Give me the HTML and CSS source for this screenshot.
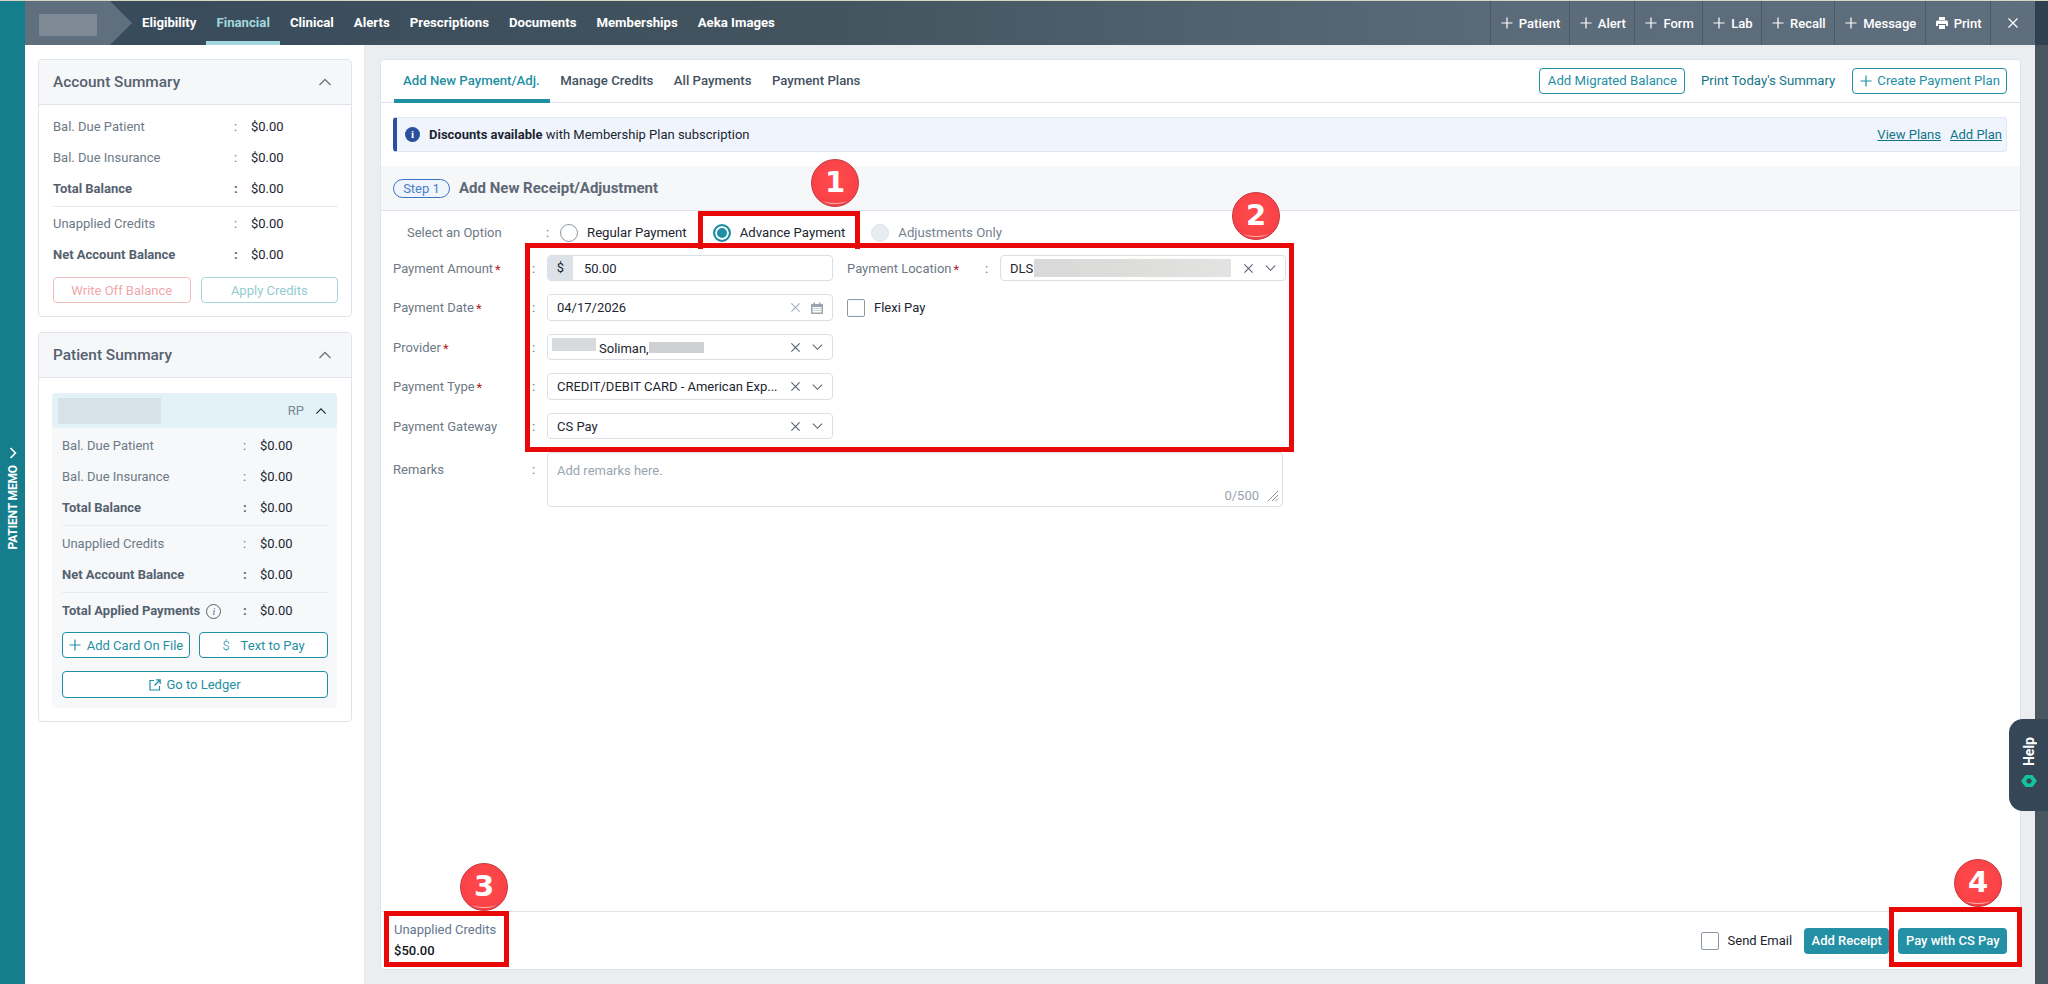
FILE: index.html
```html
<!DOCTYPE html>
<html lang="en">
<head>
    <meta charset="UTF-8">
    <meta name="viewport" content="width=device-width, initial-scale=1.0">
    <title>Add New Payment</title>
    <link rel="stylesheet" href="styles.css">
</head>
<body>
    <svg class="icon-defs" aria-hidden="true">
        <symbol id="i-plus" viewBox="0 0 12 12"><path d="M6 .5v11M.5 6h11" fill="none" stroke="currentColor" stroke-width="1.2"/></symbol>
        <symbol id="i-x" viewBox="0 0 12 12"><path d="M1.5 1.5l9 9M10.5 1.5l-9 9" fill="none" stroke="currentColor" stroke-width="1.2"/></symbol>
        <symbol id="i-down" viewBox="0 0 12 8"><path d="M1 1.5l5 5 5-5" fill="none" stroke="currentColor" stroke-width="1.2"/></symbol>
        <symbol id="i-up" viewBox="0 0 14 8"><path d="M1.5 7L7 1.5 12.5 7" fill="none" stroke="currentColor" stroke-width="1.3"/></symbol>
        <symbol id="i-print" viewBox="0 0 12 12"><path d="M3 0h6v3H3zM1.5 3.6h9c.8 0 1.5.7 1.5 1.5V9h-2V7H2v2H0V5.1c0-.8.7-1.5 1.5-1.5zM3 8h6v4H3z" fill="currentColor"/></symbol>
        <symbol id="i-cal" viewBox="0 0 12 12"><path d="M1 2h10c.5 0 1 .4 1 1v8c0 .6-.5 1-1 1H1c-.5 0-1-.4-1-1V3c0-.6.5-1 1-1zM2.500 .5h1.500V2H2.500zM8 .5h1.500V2H8z" fill="currentColor"/><path d="M1.500 5h9v5.500h-9z" fill="#fff"/><path d="M2.500 6h1v1h-1zM4.500 6h1v1h-1zM6.500 6h1v1h-1zM8.500 6h1v1h-1zM2.500 8h1v1h-1zM4.500 8h1v1h-1zM6.500 8h1v1h-1zM8.500 8h1v1h-1z" fill="currentColor"/></symbol>
        <symbol id="i-open" viewBox="0 0 12 12"><path d="M5 1.500H1v9.500h9.500V7M7 .8h4.200V5M11 1L5.500 6.500" fill="none" stroke="currentColor" stroke-width="1.200"/></symbol>
        <symbol id="i-resize" viewBox="0 0 12 12"><path d="M11 1L1 11M11 5l-6 6M11 8.500L8.500 11" fill="none" stroke="currentColor" stroke-width="1"/></symbol>
    </svg>

    <div class="topline"></div>
    <div class="app">
        <aside class="memo-strip">
            <svg class="memo-chevron" viewBox="0 0 8 12"><path d="M1.500 1l5 5-5 5" fill="none" stroke="currentColor" stroke-width="1.600"/></svg>
            <span class="memo-text">PATIENT MEMO</span>
        </aside>

        <div class="workspace">
            <header class="topbar">
                <div class="logo"><span class="logo-blur"></span></div>
                <nav class="nav">
                    <a class="nav-item">Eligibility</a>
                    <a class="nav-item active">Financial</a>
                    <a class="nav-item">Clinical</a>
                    <a class="nav-item">Alerts</a>
                    <a class="nav-item">Prescriptions</a>
                    <a class="nav-item">Documents</a>
                    <a class="nav-item">Memberships</a>
                    <a class="nav-item">Aeka Images</a>
                </nav>
                <div class="actions">
                    <a class="action"><svg class="ico-12"><use href="#i-plus"/></svg>Patient</a>
                    <a class="action"><svg class="ico-12"><use href="#i-plus"/></svg>Alert</a>
                    <a class="action"><svg class="ico-12"><use href="#i-plus"/></svg>Form</a>
                    <a class="action"><svg class="ico-12"><use href="#i-plus"/></svg>Lab</a>
                    <a class="action"><svg class="ico-12"><use href="#i-plus"/></svg>Recall</a>
                    <a class="action"><svg class="ico-12"><use href="#i-plus"/></svg>Message</a>
                    <a class="action"><svg class="ico-12"><use href="#i-print"/></svg>Print</a>
                    <a class="action action-close"><svg class="ico-12"><use href="#i-x"/></svg></a>
                </div>
            </header>

            <div class="columns">
                <div class="sidebar">
                    <section class="panel">
                        <div class="panel-head">
                            <h2>Account Summary</h2>
                            <svg class="panel-chevron"><use href="#i-up"/></svg>
                        </div>
                        <div class="panel-body">
                            <div class="sum-row"><span>Bal. Due Patient</span><i>:</i><b>$0.00</b></div>
                            <div class="sum-row"><span>Bal. Due Insurance</span><i>:</i><b>$0.00</b></div>
                            <div class="sum-row strong"><span>Total Balance</span><i>:</i><b>$0.00</b></div>
                            <div class="sum-line"></div>
                            <div class="sum-row"><span>Unapplied Credits</span><i>:</i><b>$0.00</b></div>
                            <div class="sum-row strong"><span>Net Account Balance</span><i>:</i><b>$0.00</b></div>
                            <div class="panel-buttons">
                                <button class="btn-faded red">Write Off Balance</button>
                                <button class="btn-faded teal">Apply Credits</button>
                            </div>
                        </div>
                    </section>

                    <section class="panel patient-panel">
                        <div class="panel-head">
                            <h2>Patient Summary</h2>
                            <svg class="panel-chevron"><use href="#i-up"/></svg>
                        </div>
                        <div class="patient-body">
                            <div class="patient-box">
                                <div class="patient-head">
                                    <span class="patient-blur"></span>
                                    <span class="patient-tag">RP</span>
                                    <svg class="patient-chevron"><use href="#i-up"/></svg>
                                </div>
                                <div class="patient-rows">
                                    <div class="sum-row"><span>Bal. Due Patient</span><i>:</i><b>$0.00</b></div>
                                    <div class="sum-row"><span>Bal. Due Insurance</span><i>:</i><b>$0.00</b></div>
                                    <div class="sum-row strong"><span>Total Balance</span><i>:</i><b>$0.00</b></div>
                                    <div class="sum-line"></div>
                                    <div class="sum-row"><span>Unapplied Credits</span><i>:</i><b>$0.00</b></div>
                                    <div class="sum-row strong"><span>Net Account Balance</span><i>:</i><b>$0.00</b></div>
                                    <div class="sum-line"></div>
                                    <div class="sum-row strong"><span>Total Applied Payments<em class="info-ring">i</em></span><i>:</i><b>$0.00</b></div>
                                    <div class="patient-buttons">
                                        <button class="btn-outline"><svg class="ico-12"><use href="#i-plus"/></svg>Add Card On File</button>
                                        <button class="btn-outline"><span class="thin-dollar">$</span>Text to Pay</button>
                                        <button class="btn-outline wide"><svg class="ico-12"><use href="#i-open"/></svg>Go to Ledger</button>
                                    </div>
                                </div>
                            </div>
                        </div>
                    </section>
                </div>

                <main class="main">
                    <div class="card">
                        <div class="tabs-bar">
                            <div class="tabs">
                                <a class="tab active">Add New Payment/Adj.</a>
                                <a class="tab">Manage Credits</a>
                                <a class="tab">All Payments</a>
                                <a class="tab">Payment Plans</a>
                            </div>
                            <div class="tab-tools">
                                <button class="btn-outline">Add Migrated Balance</button>
                                <a class="tool-link">Print Today's Summary</a>
                                <button class="btn-outline btn-create"><svg class="ico-12"><use href="#i-plus"/></svg>Create Payment Plan</button>
                            </div>
                        </div>

                        <div class="banner">
                            <span class="banner-info">i</span>
                            <span class="banner-text"><strong>Discounts available</strong> with Membership Plan subscription</span>
                            <a class="banner-link">View Plans</a>
                            <a class="banner-link">Add Plan</a>
                        </div>

                        <div class="step-head">
                            <span class="step-pill">Step 1</span>
                            <h3>Add New Receipt/Adjustment</h3>
                        </div>

                        <div class="options">
                            <span class="options-label">Select an Option</span>
                            <span class="options-colon">:</span>
                            <label class="radio"><span class="radio-dot"></span>Regular Payment</label>
                            <label class="radio checked"><span class="radio-dot"></span>Advance Payment</label>
                            <label class="radio disabled"><span class="radio-dot"></span>Adjustments Only</label>
                        </div>

                        <div class="form">
                            <label class="form-label">Payment Amount<sup>*</sup></label>
                            <span class="form-colon">:</span>
                            <div class="field field-money"><span class="addon">$</span><span class="field-value">50.00</span></div>
                            <label class="form-label">Payment Location<sup>*</sup></label>
                            <span class="form-colon side">:</span>
                            <div class="field">
                                <span class="field-value">DLS<span class="blur blur-location"></span></span>
                                <svg class="ico-x"><use href="#i-x"/></svg>
                                <svg class="ico-down"><use href="#i-down"/></svg>
                            </div>

                            <label class="form-label">Payment Date<sup>*</sup></label>
                            <span class="form-colon">:</span>
                            <div class="field">
                                <span class="field-value">04/17/2026</span>
                                <svg class="ico-x pale"><use href="#i-x"/></svg>
                                <svg class="ico-cal"><use href="#i-cal"/></svg>
                            </div>
                            <label class="check flexi"><span class="check-box"></span>Flexi Pay</label>

                            <label class="form-label">Provider<sup>*</sup></label>
                            <span class="form-colon">:</span>
                            <div class="field field-provider">
                                <span class="field-value"><span class="blur blur-first"></span>Soliman,<span class="blur blur-last"></span></span>
                                <svg class="ico-x"><use href="#i-x"/></svg>
                                <svg class="ico-down"><use href="#i-down"/></svg>
                            </div>
                            <span class="form-skip"></span>

                            <label class="form-label">Payment Type<sup>*</sup></label>
                            <span class="form-colon">:</span>
                            <div class="field">
                                <span class="field-value">CREDIT/DEBIT CARD - American Exp...</span>
                                <svg class="ico-x"><use href="#i-x"/></svg>
                                <svg class="ico-down"><use href="#i-down"/></svg>
                            </div>
                            <span class="form-skip"></span>

                            <label class="form-label">Payment Gateway</label>
                            <span class="form-colon">:</span>
                            <div class="field">
                                <span class="field-value">CS Pay</span>
                                <svg class="ico-x"><use href="#i-x"/></svg>
                                <svg class="ico-down"><use href="#i-down"/></svg>
                            </div>
                            <span class="form-skip"></span>

                            <label class="form-label top">Remarks</label>
                            <span class="form-colon top">:</span>
                            <div class="remarks">
                                <span class="remarks-hint">Add remarks here.</span>
                                <div class="remarks-foot">0/500<svg class="ico-resize"><use href="#i-resize"/></svg></div>
                            </div>
                        </div>

                        <footer class="card-foot">
                            <div class="credits">
                                <span>Unapplied Credits</span>
                                <strong>$50.00</strong>
                            </div>
                            <div class="foot-actions">
                                <label class="check"><span class="check-box"></span>Send Email</label>
                                <button class="btn-solid add-receipt">Add Receipt</button>
                                <button class="btn-solid">Pay with CS Pay</button>
                            </div>
                        </footer>
                    </div>
                </main>
            </div>
        </div>

        <div class="edge-strip"></div>
    </div>

    <!-- annotations drawn over the screenshot -->
    <div class="mark mark-1"></div>
    <div class="mark mark-2"></div>
    <div class="mark mark-3"></div>
    <div class="mark mark-4"></div>
    <div class="badge badge-1">1</div>
    <div class="badge badge-2">2</div>
    <div class="badge badge-3">3</div>
    <div class="badge badge-4">4</div>

    <div class="help-tab">
        <span class="help-text">Help</span>
        <svg class="help-logo" viewBox="0 0 16 12"><path d="M4.500 0h7L16 6l-4.500 6h-7L0 6z" fill="#15c39a"/><path d="M6.500 3.500h3L11 6 9.500 8.500h-3L5 6z" fill="#354657"/></svg>
    </div>
</body>
</html>
```

FILE: styles.css
```css
* {
    box-sizing: border-box;
}
html, body {
    margin: 0;
    height: 984px;
    overflow: hidden;
}
body {
    position: relative;
    font-family: Roboto, 'Noto Sans', sans-serif;
    font-size: 13px;
    color: #1c2530;
    background: #ebeef1;
}
button {
    font-family: inherit;
    font-size: 13px;
    cursor: pointer;
}
.icon-defs {
    position: absolute;
    width: 0;
    height: 0;
}
.ico-12 {
    width: 12px;
    height: 12px;
    flex: none;
}
.topline {
    height: 1px;
    background: #d8d5c3;
}
.app {
    display: flex;
    height: 983px;
}

/* left memo strip */
.memo-strip {
    width: 25px;
    flex: none;
    background: #157d8c;
    color: #fff;
    display: flex;
    flex-direction: column;
    align-items: center;
    justify-content: center;
    gap: 6px;
    padding-top: 12px;
}
.memo-chevron {
    width: 8px;
    height: 12px;
}
.memo-text {
    writing-mode: vertical-rl;
    transform: rotate(180deg);
    font-size: 12px;
    font-weight: 700;
    letter-spacing: -0.15px;
}

.workspace {
    width: 2010px;
    flex: none;
    display: flex;
    flex-direction: column;
}
.edge-strip {
    flex: 1;
    background: linear-gradient(#2f4151 0, #2f4151 44px, #48565f 44px);
}

/* top bar */
.topbar {
    height: 44px;
    display: flex;
    color: #fff;
    background: linear-gradient(90deg, #374a5b 0%, #43545f 40%, #5c6b7a 75%, #5f6e7d 100%);
}
.logo {
    width: 107px;
    flex: none;
    background: #5f6f7e;
    clip-path: polygon(0 0, 85px 0, 100% 50%, 85px 100%, 0 100%);
    padding: 13px 0 0 14px;
}
.logo-blur {
    display: block;
    width: 58px;
    height: 22px;
    background: #7d8a96;
}
.nav {
    display: flex;
}
.nav-item {
    padding: 0 10px;
    line-height: 44px;
    font-weight: 700;
    font-size: 13.2px;
}
.nav-item.active {
    color: #a3d8de;
    box-shadow: inset 0 -4px 0 #a3d8de;
}
.actions {
    margin-left: auto;
    display: flex;
}
.action {
    display: flex;
    align-items: center;
    gap: 6px;
    padding: 0 8.5px 0 10px;
    font-weight: 500;
    border-left: 1px solid #4a5967;
}
.action-close {
    width: 45px;
    justify-content: center;
    padding: 0;
}

.columns {
    flex: 1;
    display: flex;
    min-height: 0;
}

/* sidebar */
.sidebar {
    width: 340px;
    flex: none;
    background: #fff;
    padding: 14px 13px;
    border-right: 1px solid #e3e7eb;
}
.panel {
    width: 314px;
    border: 1px solid #dfe4ec;
    border-radius: 4px;
    background: #fff;
}
.patient-panel {
    margin-top: 15px;
}
.panel-head {
    height: 45px;
    background: #f6f7f9;
    border-bottom: 1px solid #dfe4ec;
    border-radius: 4px 4px 0 0;
    display: flex;
    align-items: center;
    justify-content: space-between;
    padding: 0 14px;
}
.panel-head h2 {
    margin: 0;
    font-size: 15.4px;
    font-weight: 500;
    color: #55616f;
}
.panel-chevron {
    width: 14px;
    height: 8px;
    color: #6a7683;
    margin-right: 5px;
}
.panel-body {
    padding: 6px 13px 13px 14px;
}
.sum-row {
    display: grid;
    grid-template-columns: 181px 17px 1fr;
    height: 31px;
    align-items: center;
    color: #6d7986;
}
.sum-row i {
    font-style: normal;
}
.sum-row b {
    font-weight: 400;
    color: #1c2530;
}
.sum-row.strong span,
.sum-row.strong i {
    font-weight: 700;
    color: #55616f;
}
.sum-line {
    height: 1px;
    background: #e7eaee;
    margin: 2px 0 1px;
}
.panel-buttons {
    display: flex;
    gap: 10px;
    margin-top: 7px;
}
.btn-faded {
    flex: 1;
    height: 26px;
    border-radius: 4px;
    background: #fff;
    padding: 0;
}
.btn-faded.red {
    border: 1px solid #f3bcbf;
    color: #f0a7ab;
}
.btn-faded.teal {
    border: 1px solid #a5d6dc;
    color: #94cbd3;
}

/* patient box */
.patient-body {
    padding: 15px 14px 13px 13px;
}
.patient-box {
    background: #f6f8fa;
    border-radius: 4px;
    height: 315px;
}
.patient-head {
    height: 35px;
    background: #e3f2f7;
    border-radius: 4px;
    display: flex;
    align-items: center;
    padding: 0 10px 0 6px;
}
.patient-blur {
    width: 103px;
    height: 26px;
    background: #d6e4e9;
}
.patient-tag {
    margin-left: auto;
    color: #7b8793;
}
.patient-chevron {
    width: 12px;
    height: 8px;
    margin-left: 11px;
    color: #1c2530;
}
.patient-rows {
    padding: 2px 9px 0 10px;
}
.patient-rows .sum-line {
    margin: 2px 0;
}
.info-ring {
    display: inline-block;
    width: 15px;
    height: 15px;
    line-height: 13px;
    margin-left: 6px;
    border: 1px solid #55616f;
    border-radius: 50%;
    text-align: center;
    font-size: 10px;
    font-weight: 500;
    font-family: 'Liberation Serif', serif;
    vertical-align: 0;
}
.patient-buttons {
    display: grid;
    grid-template-columns: 128px 129px;
    gap: 13px 9px;
    margin-top: 6px;
}
.patient-buttons .btn-outline {
    height: 26px;
    padding: 0;
    justify-content: center;
}
.patient-buttons .wide {
    grid-column: 1 / -1;
    height: 27px;
    gap: 5px;
}
.thin-dollar {
    font-weight: 300;
    margin-right: 5px;
}
.btn-outline {
    display: inline-flex;
    align-items: center;
    gap: 6px;
    height: 26px;
    background: #fff;
    border: 1px solid #1f8fa3;
    border-radius: 4px;
    color: #1f8fa3;
    padding: 0 6px;
}

/* main card */
.main {
    flex: 1;
    padding: 14px 14px 13px 15px;
}
.card {
    height: 911px;
    background: #fff;
    border: 1px solid #dfe4ec;
    border-radius: 4px;
    display: flex;
    flex-direction: column;
}
.tabs-bar {
    height: 43px;
    flex: none;
    display: flex;
    justify-content: space-between;
    border-bottom: 1px solid #dfe2e8;
    padding: 0 13px;
}
.tabs {
    display: flex;
}
.tab {
    height: 43px;
    line-height: 41px;
    padding: 0 10px 0 9px;
    font-weight: 500;
    font-size: 13.2px;
    color: #445160;
}
.tab + .tab {
    margin-left: 1.5px;
}
.tab.active {
    color: #1f8fa3;
    box-shadow: inset 0 -4px 0 #1f8fa3;
}
.tab-tools {
    display: flex;
    align-items: center;
    padding-bottom: 9px;
    padding-top: 8px;
}
.tab-tools .btn-outline {
    font-size: 13.2px;
    padding: 0 7px 0 8px;
    gap: 5px;
}
.tab-tools .btn-create {
    padding: 0 6px 0 7px;
}
.tool-link {
    color: #137489;
    font-size: 13.2px;
    margin: 0 17px 0 16px;
}
.banner {
    height: 35px;
    flex: none;
    margin: 14px 13px 0 12px;
    display: flex;
    align-items: center;
    gap: 9px;
    background: #f0f5fd;
    border: 1px solid #dde7f5;
    border-left: 4px solid #2a4f9d;
    border-radius: 4px;
    padding: 0 4px 0 8px;
}
.banner-info {
    width: 15px;
    height: 15px;
    line-height: 15px;
    border-radius: 50%;
    background: #2a4f9d;
    color: #fff;
    text-align: center;
    font-size: 11px;
    font-weight: 700;
    font-family: 'Liberation Serif', serif;
}
.banner-text {
    flex: 1;
}
.banner-text strong {
    font-weight: 700;
}
.banner-link {
    color: #137489;
    text-decoration: underline;
}
.step-head {
    height: 45px;
    flex: none;
    margin-top: 14px;
    background: #f6f7f9;
    border-bottom: 1px solid #dfe4ec;
    display: flex;
    align-items: center;
    gap: 9px;
    padding: 0 12px;
}
.step-pill {
    width: 57px;
    height: 19px;
    line-height: 17px;
    text-align: center;
    border: 1px solid #3b74c4;
    border-radius: 10px;
    background: #f0f5fd;
    color: #4a80c8;
}
.step-head h3 {
    margin: 0 0 1px;
    font-size: 15px;
    font-weight: 700;
    color: #5d6875;
}

/* option radios */
.options {
    height: 44px;
    flex: none;
    display: flex;
    align-items: center;
    padding: 0 0 1px 26px;
}
.options-label {
    width: 139px;
    color: #6d7986;
}
.options-colon {
    width: 14px;
    color: #6d7986;
}
.radio {
    display: flex;
    align-items: center;
    gap: 9px;
    margin-right: 26px;
    font-size: 13.2px;
}
.radio-dot {
    width: 18px;
    height: 18px;
    border: 1px solid #8d98a5;
    border-radius: 50%;
    background: #fff;
}
.radio.checked .radio-dot {
    border: 2px solid #1f8fa3;
    box-shadow: inset 0 0 0 2px #fff;
    background: #1f8fa3;
}
.radio.disabled {
    color: #76818d;
}
.radio.disabled .radio-dot {
    border-color: #dfe4e8;
    background: #e9edf0;
}

/* form grid */
.form {
    display: grid;
    grid-template-columns: 133px 21px 286px 14px 138px 15px 286px;
    grid-template-rows: 26px 27px 26px 27px 26px 55px;
    row-gap: 13px;
    padding-left: 12px;
}
.form-label {
    align-self: center;
    color: #6d7986;
}
.form-label sup {
    color: #b3232b;
    font-size: 13px;
    line-height: 0;
    margin-left: 2px;
    vertical-align: -1px;
}
.form-colon {
    align-self: center;
    padding-left: 6px;
    color: #6d7986;
}
.form-colon.side {
    padding-left: 0;
}
.form-label.top,
.form-colon.top {
    align-self: start;
    padding-top: 10px;
}
.form-label:nth-of-type(2) {
    grid-column: 5;
}
.form .field:nth-child(6) {
    grid-column: 7;
}
.flexi {
    grid-column: 5 / -1;
}
.form-skip {
    grid-column: 4 / -1;
}
.field {
    display: flex;
    align-items: center;
    border: 1px solid #dadfe6;
    border-radius: 4px;
    padding: 0 9px;
    background: #fff;
    min-width: 0;
}
.field-value {
    flex: 1;
    min-width: 0;
    white-space: nowrap;
    display: block;
}
.field-money {
    padding: 0;
    overflow: hidden;
}
.addon {
    width: 25px;
    height: 100%;
    background: #dde2e8;
    text-align: center;
    line-height: 23px;
}
.field-money .field-value {
    padding-left: 11px;
}
.field-provider {
    padding-left: 4px;
}
.blur {
    display: inline-block;
    background: #d8dbde;
}
.blur-location {
    width: 197px;
    height: 18px;
    margin-left: 1px;
    vertical-align: -4px;
    background: linear-gradient(90deg, #d9d9d9, #dededb 60%, #e3e3e3);
}
.blur-first {
    width: 44px;
    height: 13px;
    margin-right: 3px;
    vertical-align: 2px;
}
.blur-last {
    width: 55px;
    height: 11px;
    background: #cfd0d2;
}
.ico-x {
    width: 11px;
    height: 11px;
    flex: none;
    color: #56616e;
    margin-left: 9px;
}
.ico-x.pale {
    color: #a5aeb8;
}
.ico-down {
    width: 11px;
    height: 8px;
    flex: none;
    color: #56616e;
    margin-left: 11px;
}
.ico-cal {
    width: 12px;
    height: 12px;
    flex: none;
    color: #98a4b0;
    margin: 0 0 0 10px;
}
.check {
    display: flex;
    align-items: center;
    gap: 9px;
}
.check-box {
    width: 18px;
    height: 18px;
    border: 1px solid #8d98a5;
    border-radius: 2px;
    background: #fff;
}
.remarks {
    grid-column: 3 / -1;
    margin-right: 3px;
    border: 1px solid #dadfe6;
    border-radius: 4px;
    padding: 10px 3px 3px 9px;
    display: flex;
    flex-direction: column;
    justify-content: space-between;
}
.remarks-hint {
    color: #9aa5b1;
}
.remarks-foot {
    align-self: flex-end;
    display: flex;
    align-items: center;
    gap: 8px;
    color: #98a2ad;
}
.ico-resize {
    width: 12px;
    height: 12px;
    color: #8a95a1;
}

/* card footer */
.card-foot {
    margin-top: auto;
    height: 58px;
    flex: none;
    border-top: 1px solid #dfe4ec;
    display: flex;
    align-items: center;
    justify-content: space-between;
    padding: 0 13px;
}
.credits {
    display: flex;
    flex-direction: column;
    gap: 6px;
    padding-bottom: 2px;
    color: #64768c;
}
.credits strong {
    font-weight: 500;
    color: #10151b;
}
.foot-actions {
    display: flex;
    align-items: center;
}
.add-receipt {
    margin: 0 9px 0 12px;
}
.btn-solid {
    height: 26px;
    border: none;
    border-radius: 4px;
    background: #2490a5;
    color: #fff;
    font-weight: 500;
    padding: 0 7.5px;
}

/* annotation boxes and number badges */
.mark {
    position: absolute;
    border: 5px solid #e80808;
}
.mark-1 {
    left: 698px;
    top: 211px;
    width: 162px;
    height: 38px;
    border-bottom: none;
}
.mark-2 {
    left: 525px;
    top: 243px;
    width: 769px;
    height: 209px;
}
.mark-3 {
    left: 384px;
    top: 911px;
    width: 125px;
    height: 56px;
}
.mark-4 {
    left: 1889px;
    top: 907px;
    width: 133px;
    height: 60px;
}
.badge {
    position: absolute;
    width: 48px;
    height: 48px;
    border-radius: 50%;
    border: 1px solid #c53840;
    background: radial-gradient(circle at 50% 42%, #ff4a4c 0, #fa4246 70%, #d9363d 100%);
    color: #fff;
    text-align: center;
    font-family: 'DejaVu Sans', sans-serif;
    font-weight: 700;
    font-size: 29px;
    line-height: 44px;
}
.badge::after {
    content: "";
    position: absolute;
    left: 11px;
    right: 11px;
    bottom: 2px;
    height: 6px;
    border-bottom: 1px solid #ffb2b0;
    border-radius: 0 0 50% 50%;
}
.badge-1 {
    left: 811px;
    top: 159px;
}
.badge-2 {
    left: 1232px;
    top: 192px;
}
.badge-3 {
    left: 460px;
    top: 863px;
}
.badge-4 {
    left: 1954px;
    top: 859px;
}
.help-tab {
    position: absolute;
    left: 2009px;
    top: 719px;
    width: 39px;
    height: 92px;
    background: #354657;
    border-radius: 14px 0 0 14px;
    color: #fff;
    display: flex;
    flex-direction: column;
    align-items: center;
    padding-top: 18px;
    gap: 9px;
}
.help-text {
    writing-mode: vertical-rl;
    transform: rotate(180deg);
    font-size: 14px;
    font-weight: 700;
}
.help-logo {
    width: 16px;
    height: 12px;
}
```
